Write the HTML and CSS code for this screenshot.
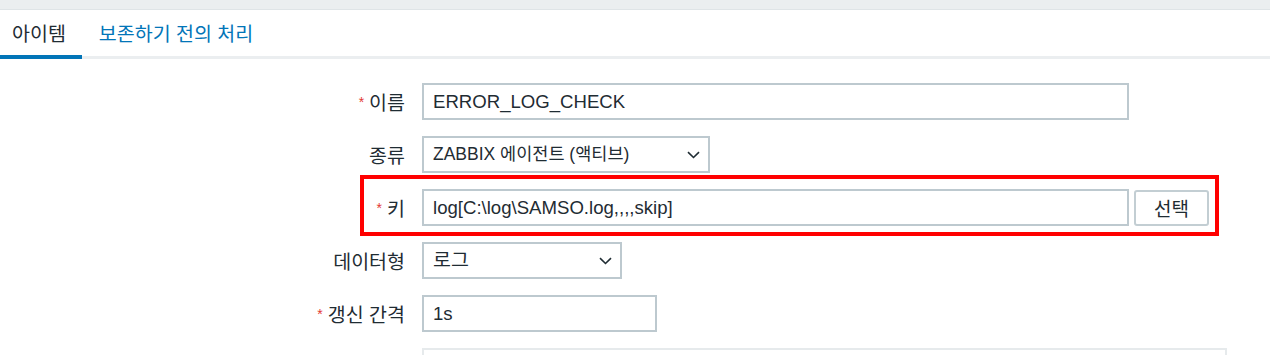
FILE: index.html
```html
<!DOCTYPE html>
<html lang="ko">

<head>
  <meta charset="UTF-8">
  <meta name="viewport" content="width=device-width, initial-scale=1.0">
  <title>아이템</title>
  <link rel="stylesheet" href="styles.css">
</head>

<body>
<div class="top_bar"></div>
<div class="tabs">
  <a class="tab tab_active">아이템</a>
  <a class="tab">보존하기 전의 처리</a>
</div>
<div class="item_form">
  <div class="form_row">
    <label><span class="req">*</span>이름</label>
    <div class="field input_name">ERROR_LOG_CHECK</div>
  </div>
  <div class="form_row">
    <label>종류</label>
    <div class="field select select_type">
      <span>ZABBIX 에이전트 (액티브)</span>
      <svg width="13" height="8" viewBox="0 0 13 8"><path d="M1 1.2l5.5 5.3 5.5-5.3" fill="none" stroke="#1f2c33" stroke-width="1.6"/></svg>
    </div>
  </div>
  <div class="form_row row_mark">
    <label><span class="req">*</span>키</label>
    <div class="field input_key">log[C:\log\SAMSO.log,,,,skip]</div>
    <button class="btn">선택</button>
  </div>
  <div class="form_row">
    <label>데이터형</label>
    <div class="field select select_data">
      <span>로그</span>
      <svg width="13" height="8" viewBox="0 0 13 8"><path d="M1 1.2l5.5 5.3 5.5-5.3" fill="none" stroke="#1f2c33" stroke-width="1.6"/></svg>
    </div>
  </div>
  <div class="form_row">
    <label><span class="req">*</span>갱신 간격</label>
    <div class="field input_delay">1s</div>
  </div>
  <div class="form_row row_last">
    <label></label>
    <div class="field field_light"></div>
  </div>
</div>
</body>

</html>
```

FILE: styles.css
```css
body {
  margin: 0;
  padding: 0;
  background: #fff;
  color: #1f2c33;
  font-family: 'Liberation Sans', 'Noto Sans CJK KR', sans-serif;
  font-size: 18.6px;
}

.top_bar {
  height: 9px;
  background: #ebeef0;
  border-bottom: 1px solid #dfe4e7;
}

.tabs {
  display: flex;
  border-bottom: 3px solid #ebeef0;
  font-size: 19.5px;
}

.tab {
  padding: 12px 17px 10px;
  line-height: 24px;
  color: #0275b8;
  cursor: pointer;
}

.tab_active {
  padding: 12px 16px 9px 12px;
  color: #1f2c33;
  border-bottom: 4px solid #0275b8;
  margin-bottom: -3px;
}

.item_form {
  margin-top: 24px;
}

.form_row {
  display: flex;
  align-items: center;
  height: 37px;
  margin-bottom: 16px;
}

.row_last {
  margin-bottom: 0;
  height: 7px;
  align-items: flex-start;
  overflow: hidden;
}

.form_row label {
  width: 405px;
  padding-right: 17px;
  text-align: right;
  flex-shrink: 0;
  font-size: 19.5px;
}

.req {
  color: #e33734;
  font-size: 14px;
  margin-right: 5px;
  position: relative;
  top: -3px;
}

.field {
  box-sizing: border-box;
  height: 37px;
  border: 2px solid #bdc9cf;
  padding: 0 9px;
  line-height: 33px;
  white-space: nowrap;
}

.input_name,
.input_key {
  width: 707px;
}

.input_delay {
  width: 235px;
}

.select {
  display: flex;
  align-items: center;
  justify-content: space-between;
  padding-right: 8px;
}

.select_type {
  width: 288px;
  font-size: 17.5px;
}

.select_data {
  width: 200px;
  font-size: 19.5px;
}

.field_light {
  width: 805px;
  border-color: #e6eaec;
}

.btn {
  box-sizing: border-box;
  margin-left: 5px;
  width: 75px;
  height: 36px;
  border: 2px solid #c3ced3;
  border-radius: 3px;
  background: #fff;
  color: #1f2c33;
  font-family: inherit;
  font-size: 19px;
}

/* 강조 표시 */
.row_mark {
  position: relative;
}

.row_mark::before {
  content: '';
  position: absolute;
  left: 360px;
  top: -14px;
  width: 859px;
  height: 61px;
  box-sizing: border-box;
  border: 4px solid #f00;
}
```
